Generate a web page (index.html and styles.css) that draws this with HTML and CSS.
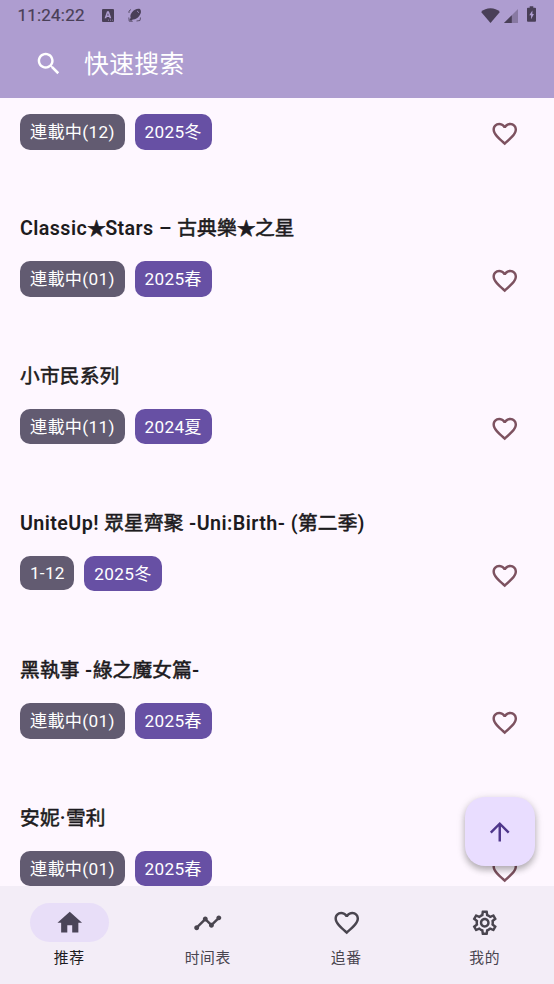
FILE: index.html
```html
<!DOCTYPE html>
<html lang="zh-CN">
<head>
<meta charset="utf-8">
<title>推荐</title>
<link rel="stylesheet" href="styles.css">
</head>
<body>
<svg width="0" height="0" class="defs" aria-hidden="true">
  <symbol id="heart" viewBox="0 0 24 24"><path d="M16.5 3c-1.74 0-3.41.81-4.5 2.09C10.91 3.81 9.24 3 7.5 3 4.42 3 2 5.42 2 8.5c0 3.78 3.4 6.86 8.55 11.54L12 21.35l1.45-1.32C18.6 15.36 22 12.28 22 8.5 22 5.42 19.58 3 16.5 3zm-4.4 15.55l-.1.1-.1-.1C7.14 14.24 4 11.39 4 8.5 4 6.5 5.5 5 7.5 5c1.54 0 3.04.99 3.57 2.36h1.87C13.46 5.99 14.96 5 16.5 5c2 0 3.5 1.5 3.5 3.5 0 2.89-3.14 5.74-7.9 10.05z"/></symbol>
</svg>
<div class="app">
  <header class="top">
    <div class="status">
      <span class="clock">11:24:22</span>
      <svg class="st-a" viewBox="0 0 12 13"><path fill-rule="evenodd" d="M1 0h10a1 1 0 0 1 1 1v11a1 1 0 0 1-1 1H1a1 1 0 0 1-1-1V1a1 1 0 0 1 1-1zM5 2.200 2.600 9.200h1.700l.4-1.300h2.500l.4 1.300h1.700L6.900 2.200zM5.950 4.200l.8 2.400H5.150zM6 10.700v.9h1v-.9zM8 10.700v.9h1v-.9zM10 10.700v.9h.8v-.9z"/></svg>
      <svg class="st-b" viewBox="0 0 14 14"><path d="M4 4.200C6 1.500 9.500.2 12 1c1.500 1.500 1.300 4.500-.8 7-1.700 2.200-4.200 3.600-6.500 3.400L3 13l-1.500-1.500L2.700 10C2 8 2.500 6 4 4.200z"/><path class="line" d="M1 5V3l2-1.500M.8 9.500l.4 3.700 3.500.1M8.500 13l3.500-.5.500-3"/><path class="cut" d="M9.200 3l1.600 1.600"/></svg>
      <span class="grow"></span>
      <svg class="st-wifi" viewBox="0 0 20 16"><path d="M0 4.200C2.700 1.500 6 .2 10 .2s7.300 1.300 10 4L10 16z"/></svg>
      <svg class="st-cell" viewBox="0 0 14 14"><path opacity=".38" d="M14 0v14H0z"/><path d="M7.800 6.200V14H0z"/></svg>
      <svg class="st-bat" viewBox="0 0 10 17"><path fill-rule="evenodd" d="M3 0h4v1.500h2a1 1 0 0 1 1 1V16a1 1 0 0 1-1 1H1a1 1 0 0 1-1-1V2.500a1 1 0 0 1 1-1h2zM6 4.500 2.500 10h2v4.200L7.700 8.500H6z"/></svg>
    </div>
    <div class="search">
      <svg class="icon" viewBox="0 0 24 24"><path d="M15.500 14h-.79l-.28-.27C15.410 12.590 16 11.110 16 9.500 16 5.910 13.090 3 9.500 3S3 5.910 3 9.500 5.910 16 9.500 16c1.610 0 3.090-.59 4.230-1.570l.27.28v.79l5 4.990L20.490 19l-4.990-5zm-6 0C7.010 14 5 11.990 5 9.500S7.010 5 9.500 5 14 7.010 14 9.500 11.990 14 9.500 14z"/></svg>
      <span>快速搜索</span>
    </div>
  </header>

  <main class="list">
    <article class="item first">
      <div class="row"><span class="chip">連載中(12)</span><span class="chip season">2025冬</span><svg class="icon fav"><use href="#heart"/></svg></div>
    </article>
    <article class="item">
      <h2><b>Classic</b><span class="star">★</span><b>Stars – </b>古典樂<span class="star">★</span>之星</h2>
      <div class="row"><span class="chip">連載中(01)</span><span class="chip season">2025春</span><svg class="icon fav"><use href="#heart"/></svg></div>
    </article>
    <article class="item">
      <h2>小市民系列</h2>
      <div class="row"><span class="chip">連載中(11)</span><span class="chip season">2024夏</span><svg class="icon fav"><use href="#heart"/></svg></div>
    </article>
    <article class="item">
      <h2><b>UniteUp! </b>眾星齊聚<b> -Uni:Birth- (</b>第二季<b>)</b></h2>
      <div class="row"><span class="chip latin">1-12</span><span class="chip season">2025冬</span><svg class="icon fav"><use href="#heart"/></svg></div>
    </article>
    <article class="item">
      <h2>黑執事<b> -</b>綠之魔女篇<b>-</b></h2>
      <div class="row"><span class="chip">連載中(01)</span><span class="chip season">2025春</span><svg class="icon fav"><use href="#heart"/></svg></div>
    </article>
    <article class="item">
      <h2>安妮<b>·</b>雪利</h2>
      <div class="row"><span class="chip">連載中(01)</span><span class="chip season">2025春</span><svg class="icon fav"><use href="#heart"/></svg></div>
    </article>
    <button class="fab" aria-label="回到顶部"><svg class="icon" viewBox="0 0 24 24"><path d="M4 12l1.410 1.410L11 7.830V20h2V7.830l5.580 5.590L20 12l-8-8-8 8z"/></svg></button>
  </main>

  <nav class="nav">
    <a class="tab active"><span class="pill"><svg class="icon" viewBox="0 0 24 24"><path d="M10 20v-6h4v6h5v-8h3L12 3 2 12h3v8z"/></svg></span><span>推荐</span></a>
    <a class="tab"><span class="pill"><svg class="icon" viewBox="0 0 24 24"><path d="M23 8c0 1.100-.9 2-2 2-.18 0-.35-.02-.51-.07l-3.560 3.550c.05.16.07.34.07.52 0 1.100-.9 2-2 2s-2-.9-2-2c0-.18.02-.36.07-.52l-2.550-2.550c-.16.05-.34.07-.52.07s-.36-.02-.52-.07l-4.550 4.560c.05.16.07.33.07.51 0 1.100-.9 2-2 2s-2-.9-2-2 .9-2 2-2c.18 0 .35.02.51.07l4.560-4.550C8.020 9.360 8 9.180 8 9c0-1.100.9-2 2-2s2 .9 2 2c0 .18-.02.36-.07.52l2.550 2.550c.16-.05.34-.07.52-.07s.36.02.52.07l3.550-3.560C19.020 8.350 19 8.180 19 8c0-1.100.9-2 2-2s2 .9 2 2z"/></svg></span><span>时间表</span></a>
    <a class="tab"><span class="pill"><svg class="icon"><use href="#heart"/></svg></span><span>追番</span></a>
    <a class="tab"><span class="pill"><svg class="icon" viewBox="0 0 24 24"><path d="M19.43 12.98c.04-.32.07-.64.07-.98s-.03-.66-.07-.98l2.110-1.650c.19-.15.24-.42.12-.64l-2-3.460c-.09-.16-.26-.25-.44-.25-.06 0-.12.01-.17.03l-2.490 1c-.52-.4-1.080-.73-1.690-.98l-.38-2.650C14.460 2.180 14.250 2 14 2h-4c-.25 0-.46.18-.49.42l-.38 2.650c-.61.25-1.170.59-1.690.98l-2.490-1c-.06-.02-.12-.03-.18-.03-.17 0-.34.09-.43.25l-2 3.460c-.13.22-.07.49.12.64l2.110 1.650c-.04.32-.07.65-.07.98s.03.66.07.98l-2.110 1.650c-.19.15-.24.42-.12.64l2 3.460c.09.16.26.25.44.25.06 0 .12-.01.17-.03l2.490-1c.52.4 1.080.73 1.690.98l.38 2.650c.03.24.24.42.49.42h4c.25 0 .46-.18.49-.42l.38-2.650c.61-.25 1.170-.59 1.690-.98l2.490 1c.06.02.12.03.18.03.17 0 .34-.09.43-.25l2-3.460c.12-.22.07-.49-.12-.64l-2.110-1.650zm-1.980-1.710c.04.31.05.52.05.73 0 .21-.02.43-.05.73l-.14 1.130.89.7 1.080.84-.7 1.210-1.270-.51-1.040-.42-.9.68c-.43.32-.84.56-1.250.73l-1.060.43-.16 1.130-.2 1.350h-1.400l-.19-1.350-.16-1.130-1.060-.43c-.43-.18-.83-.41-1.230-.71l-.91-.7-1.060.43-1.270.51-.7-1.210 1.080-.84.89-.7-.14-1.130c-.03-.31-.05-.54-.05-.74s.02-.43.05-.73l.14-1.130-.89-.7-1.080-.84.7-1.210 1.270.51 1.040.42.9-.68c.43-.32.84-.56 1.250-.73l1.060-.43.16-1.130.2-1.350h1.390l.19 1.350.16 1.130 1.060.43c.43.18.83.41 1.230.71l.91.7 1.060-.43 1.270-.51.7 1.210-1.070.85-.89.7.14 1.130zM12 8c-2.210 0-4 1.790-4 4s1.790 4 4 4 4-1.790 4-4-1.790-4-4-4zm0 6c-1.100 0-2-.9-2-2s.9-2 2-2 2 .9 2 2-.9 2-2 2z"/></svg></span><span>我的</span></a>
  </nav>
</div>
</body>
</html>
```
FILE: styles.css
```css
* { box-sizing: border-box; }
body {
  margin: 0;
  font-family: Roboto, "Noto Sans CJK SC", sans-serif;
  color: #1d1b20;
}
svg { display: block; fill: currentColor; flex: none; }
.defs { position: absolute; }
.icon { width: 29.5px; height: 29.5px; }
.app { display: flex; flex-direction: column; height: 984px; overflow: hidden; background: #fef7ff; }

.top { flex: none; height: 98px; background: #ae9dd0; }
.status { display: flex; align-items: center; height: 30px; padding: 0 18px 0 17.5px; color: #493f57; }
.clock { width: 84px; font-size: 17px; line-height: 30px; letter-spacing: .2px; -webkit-text-stroke: .2px; white-space: nowrap; }
.st-a { width: 12px; height: 13px; margin-right: 14px; }
.st-b { width: 14px; height: 14px; }
.st-b .line { fill: none; stroke: currentColor; stroke-width: .8; }
.st-b .cut { fill: none; stroke: #ae9dd0; stroke-width: 1; }
.grow { flex: 1; }
.st-wifi { width: 19px; height: 15px; margin-right: 4px; }
.st-cell { width: 14px; height: 14px; margin: 1px 9.5px 0 0; }
.st-bat { width: 9px; height: 16px; margin-top: -2px; }
.search { display: flex; align-items: center; gap: 20.5px; height: 68px; padding: 0 0 0 34px; color: #fff; font-size: 24.8px; letter-spacing: .35px; line-height: 36px; }
.search span { padding-top: 1px; }

.list { position: relative; flex: 1; min-height: 0; overflow: hidden; }
.item { height: 147.3px; padding: 0 20px; }
.item.first { height: 101.9px; padding-top: 16px; }
h2 { margin: 0 0 16.5px; padding-top: 14.5px; height: 45px; font-size: 19.7px; line-height: 30px; font-weight: 400; letter-spacing: .2px; white-space: nowrap; -webkit-text-stroke: .55px; }
h2 b { font-weight: 600; letter-spacing: .42px; -webkit-text-stroke: 0; }
h2 .star { display: inline-block; width: 18px; font-size: 18.5px; letter-spacing: 0; }
.row { display: flex; align-items: flex-start; gap: 10px; }
.chip { height: 35.5px; padding: 0 9.9px; border-radius: 10px; background: #625b71; color: #fff; font-size: 17.2px; line-height: 36px; letter-spacing: .3px; white-space: nowrap; }
.chip.latin { height: 34.5px; padding: 0 9.6px 0 9.9px; line-height: 35px; }
.chip.season { background: #6750a4; }
.fav { margin: 5px 14.5px 0 auto; color: #7d5260; }
.fab { position: absolute; right: 19.5px; bottom: 20px; width: 69.5px; height: 69px; padding: 0; border: 0; border-radius: 20px; display: grid; place-items: center; background: #e9ddff; color: #4f378b; box-shadow: 0 4px 6px rgba(0,0,0,.22), 0 2px 10px rgba(0,0,0,.14); }

.nav { flex: none; display: flex; height: 98px; background: #f3edf7; }
.tab { flex: 1; display: flex; flex-direction: column; align-items: center; gap: 4px; padding-top: 17px; color: #49454f; font-size: 14.8px; line-height: 24px; letter-spacing: .6px; }
.pill { display: grid; place-items: center; width: 79px; height: 39px; border-radius: 20px; }
.active { color: #1d1b20; }
.active .pill { background: #e8def8; color: #4a4458; }
```
